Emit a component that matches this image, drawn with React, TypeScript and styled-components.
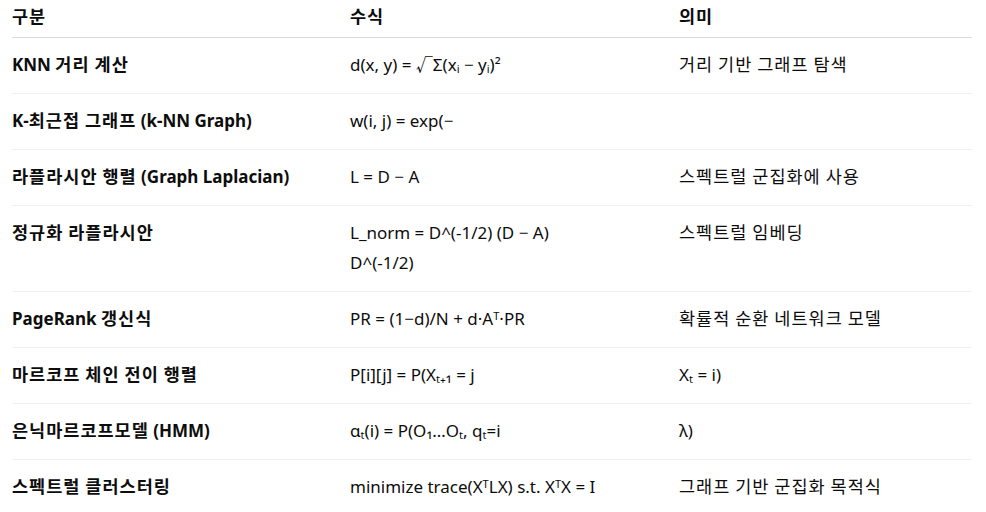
import styled, { createGlobalStyle } from "styled-components";

const GlobalStyle = createGlobalStyle`
  html, body {
    margin: 0;
    padding: 0;
    background: #ffffff;
  }
  body {
    font-family: "Noto Sans", "Noto Sans CJK KR", sans-serif;
    color: #0d0d0d;
  }
`;

const Table = styled.div`
  width: 960px;
  margin: 0 14px 0 12px;
  font-size: 17px;
`;

const Row = styled.div<{ $head?: boolean }>`
  display: grid;
  grid-template-columns: 338px 329px 1fr;
  border-bottom: 1px solid ${(p) => (p.$head ? "#d9d9d9" : "#efefef")};
  padding: ${(p) => (p.$head ? "2px 0 5px" : "12px 0 13px")};
`;

const Cell = styled.div<{ $bold?: boolean }>`
  line-height: 30px;
  font-weight: ${(p) => (p.$bold ? 700 : 400)};
  padding-right: 16px;
  white-space: nowrap;
`;

// Hangul runs come out narrower in Noto CJK than in the original font
const Hangul = styled.span`
  font-family: "Noto Sans CJK KR", sans-serif;
  font-size: 17.5px;
  line-height: 1;
  letter-spacing: 1px;
`;

function Text({ value }: { value: string }) {
  const parts = value.split(/([\uAC00-\uD7A3]+(?:\s+[\uAC00-\uD7A3]+)*)/);
  return (
    <>
      {parts.map((part, i) =>
        /[\uAC00-\uD7A3]/.test(part) ? <Hangul key={i}>{part}</Hangul> : part
      )}
    </>
  );
}

interface Item {
  name: string;
  formula: string[];
  meaning: string;
}

const items: Item[] = [
  { name: "KNN 거리 계산", formula: ["d(x, y) = √Σ(xᵢ − yᵢ)²"], meaning: "거리 기반 그래프 탐색" },
  { name: "K-최근접 그래프 (k-NN Graph)", formula: ["w(i, j) = exp(−"], meaning: "" },
  { name: "라플라시안 행렬 (Graph Laplacian)", formula: ["L = D − A"], meaning: "스펙트럴 군집화에 사용" },
  { name: "정규화 라플라시안", formula: ["L_norm = D^(-1/2) (D − A)", "D^(-1/2)"], meaning: "스펙트럴 임베딩" },
  { name: "PageRank 갱신식", formula: ["PR = (1−d)/N + d·Aᵀ·PR"], meaning: "확률적 순환 네트워크 모델" },
  { name: "마르코프 체인 전이 행렬", formula: ["P[i][j] = P(Xₜ₊₁ = j"], meaning: "Xₜ = i)" },
  { name: "은닉마르코프모델 (HMM)", formula: ["αₜ(i) = P(O₁…Oₜ, qₜ=i"], meaning: "λ)" },
  { name: "스펙트럴 클러스터링", formula: ["minimize trace(XᵀLX) s.t. XᵀX = I"], meaning: "그래프 기반 군집화 목적식" },
];

export default function App() {
  return (
    <>
      <GlobalStyle />
      <Table>
        <Row $head>
          <Cell $bold><Text value="구분" /></Cell>
          <Cell $bold><Text value="수식" /></Cell>
          <Cell $bold><Text value="의미" /></Cell>
        </Row>
        {items.map((it) => (
          <Row key={it.name}>
            <Cell $bold><Text value={it.name} /></Cell>
            <Cell>
              {it.formula.map((line) => (
                <div key={line}>{line}</div>
              ))}
            </Cell>
            <Cell><Text value={it.meaning} /></Cell>
          </Row>
        ))}
      </Table>
    </>
  );
}
